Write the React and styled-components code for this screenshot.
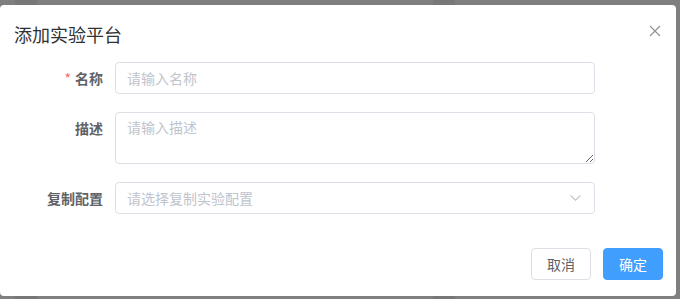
import React from "react";
import styled, { createGlobalStyle } from "styled-components";

const Global = createGlobalStyle`
  html, body { margin: 0; padding: 0; }
  body {
    width: 680px;
    height: 299px;
    overflow: hidden;
    font-family: "Noto Sans CJK SC", "Noto Sans", sans-serif;
    background: linear-gradient(
      to right,
      #7f7f7f 0px, #7f7f7f 15px,
      #777777 15px, #777777 37px,
      #7f7f7f 37px, #7f7f7f 433px,
      #777777 433px, #777777 455px,
      #7f7f7f 455px
    );
  }
  * { box-sizing: border-box; }
`;

const Backdrop = styled.div`
  width: 680px;
  height: 299px;
  padding-top: 5px;
`;

const Dialog = styled.div`
  width: 676px;
  height: 291px;
  background: #fff;
  border-radius: 4px;
  display: flex;
  flex-direction: column;
`;

const Header = styled.div`
  display: flex;
  align-items: center;
  justify-content: space-between;
  padding: 17px 15px 0 14px;
  height: 41px;
`;

const Title = styled.span`
  font-size: 18px;
  line-height: 24px;
  color: #303133;
`;

const Close = styled.button`
  border: 0;
  background: none;
  padding: 0;
  width: 12px;
  height: 12px;
  display: flex;
  align-items: center;
  justify-content: center;
  cursor: pointer;
  margin-top: -6px;
`;

const Body = styled.div`
  padding: 16px 0 0 0;
  display: flex;
  flex-direction: column;
  gap: 18px;
`;

const Row = styled.div`
  display: flex;
  align-items: flex-start;
`;

const Label = styled.label`
  width: 115px;
  padding-right: 12px;
  text-align: right;
  font-size: 14px;
  line-height: 32px;
  font-weight: 700;
  color: #606266;
`;

const Star = styled.span`
  color: #f56c6c;
  margin-right: 4px;
  font-weight: 400;
`;

const Input = styled.input`
  width: 480px;
  height: 32px;
  border: 1px solid #dcdfe6;
  border-radius: 4px;
  padding: 0 11px;
  font-family: inherit;
  font-size: 14px;
  color: #606266;
  outline: none;
  &::placeholder { color: #c0c4cc; }
`;

const TextArea = styled.textarea`
  width: 480px;
  height: 52px;
  border: 1px solid #dcdfe6;
  border-radius: 4px;
  padding: 4px 11px;
  font-family: inherit;
  font-size: 14px;
  line-height: 21px;
  color: #606266;
  outline: none;
  resize: vertical;
  display: block;
  &::placeholder { color: #c0c4cc; }
`;

const Select = styled.div`
  width: 480px;
  height: 32px;
  border: 1px solid #dcdfe6;
  border-radius: 4px;
  padding: 0 13px 0 11px;
  display: flex;
  align-items: center;
  justify-content: space-between;
  font-size: 14px;
  color: #c0c4cc;
`;

const Footer = styled.div`
  margin-top: auto;
  display: flex;
  justify-content: flex-end;
  gap: 12px;
  padding: 0 13px 16px 0;
`;

const Button = styled.button`
  width: 60px;
  height: 32px;
  border-radius: 4px;
  font-family: inherit;
  font-size: 14px;
  line-height: 1;
  border: 1px solid ${p => (p.$primary ? "#409eff" : "#dcdfe6")};
  background: ${p => (p.$primary ? "#409eff" : "#fff")};
  color: ${p => (p.$primary ? "#fff" : "#606266")};
  cursor: pointer;
`;

export default function App() {
  return (
    <>
      <Global />
      <Backdrop>
        <Dialog>
          <Header>
            <Title>添加实验平台</Title>
            <Close aria-label="close">
              <svg width="12" height="12" viewBox="0 0 12 12">
                <path d="M1 1L11 11M11 1L1 11" stroke="#909399" strokeWidth="1.2" fill="none" />
              </svg>
            </Close>
          </Header>
          <Body>
            <Row>
              <Label><Star>*</Star>名称</Label>
              <Input placeholder="请输入名称" />
            </Row>
            <Row>
              <Label>描述</Label>
              <TextArea placeholder="请输入描述" />
            </Row>
            <Row>
              <Label>复制配置</Label>
              <Select>
                <span>请选择复制实验配置</span>
                <svg width="11" height="6" viewBox="0 0 11 6">
                  <path d="M0.5 0.5L5.5 5.2L10.5 0.5" stroke="#c0c4cc" strokeWidth="1.1" fill="none" />
                </svg>
              </Select>
            </Row>
          </Body>
          <Footer>
            <Button>取消</Button>
            <Button $primary>确定</Button>
          </Footer>
        </Dialog>
      </Backdrop>
    </>
  );
}
